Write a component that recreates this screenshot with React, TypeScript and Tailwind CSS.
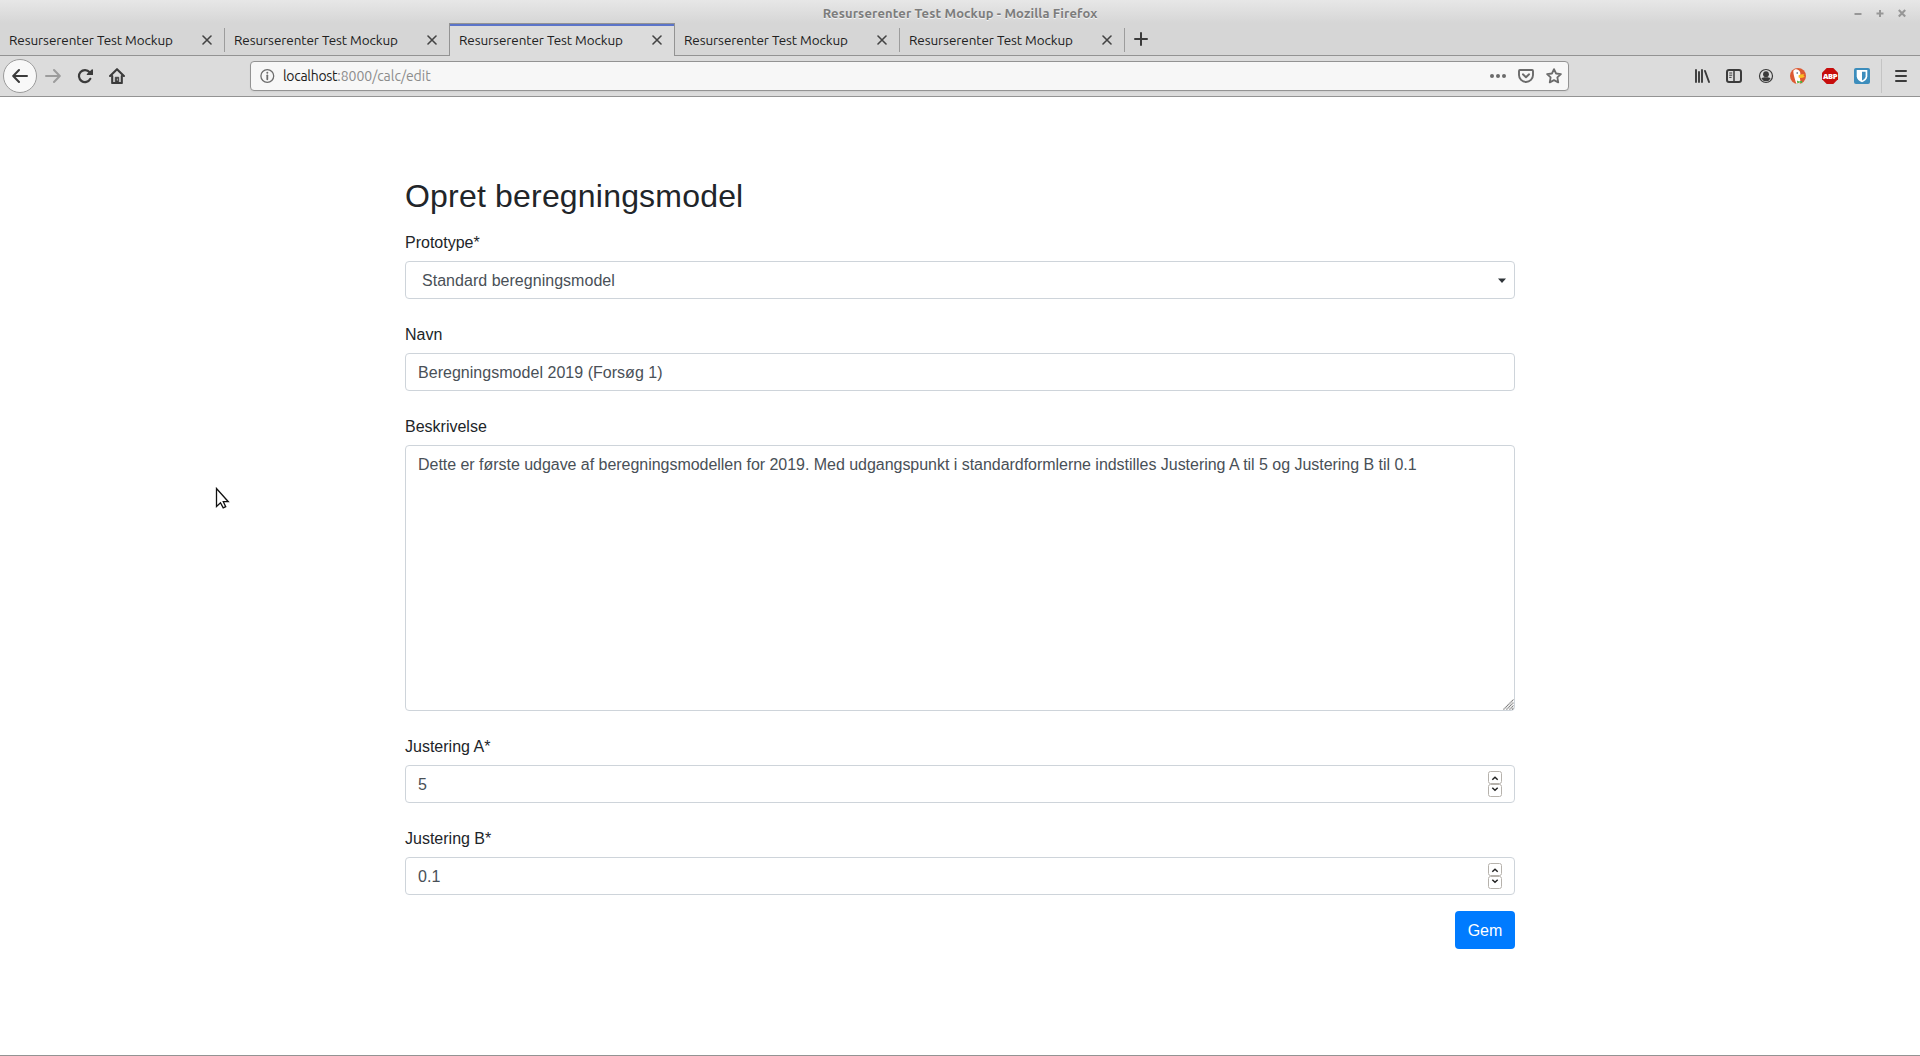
import React from 'react';

const TABS = [0, 1, 2, 3, 4];
const ACTIVE_TAB = 2;

function Field({ label, children }: { label: string; children: React.ReactNode }) {
  return (
    <div className="flex flex-col">
      <label className="mb-1.5 h-6 text-base leading-6 text-[#212529]">{label}</label>
      {children}
    </div>
  );
}

function TitleBar() {
  return (
    <div className="flex h-[23px] shrink-0 items-start bg-linear-to-b from-[#e7e7e7] to-[#d6d6d6]">
      <div className="w-[120px]" />
      <div className="flex-1 pt-1 text-center text-[13px] font-semibold leading-[18px] tracking-[0.13px] text-[#7c7c7c] [text-shadow:0_1px_0_#f4f4f4]">
        Resurserenter Test Mockup - Mozilla Firefox
      </div>
      <svg width="120" height="23" viewBox="0 0 120 23" fill="none" stroke="#979797" strokeWidth="2">
        <path d="M54.5 14h7M76.5 13.5h7M80 10v7" />
        <path d="M98.8 10l6.4 6.4M105.2 10l-6.4 6.4" strokeWidth="2.1" />
      </svg>
    </div>
  );
}

function Tab({ active, beforeActive }: { active: boolean; beforeActive: boolean }) {
  const frame = active
    ? 'w-[226px] -ml-px border-x border-t border-[#939393] bg-[#dcdcdc] pl-[9px]'
    : 'w-[225px] border-b border-[#939393] pl-[9px]';
  return (
    <div className={`relative flex h-[33px] shrink-0 ${frame}`}>
      {active && <div className="absolute inset-x-0 top-0 h-0.5 bg-[#5b74c9]" />}
      <div
        className={`w-[192px] whitespace-nowrap text-[13.5px] leading-[18px] tracking-[-0.08px] text-[#202020] ${
          active ? 'pt-[7px]' : 'pt-2'
        }`}
      >
        Resurserenter Test Mockup
      </div>
      <svg
        className={active ? 'mt-[11px]' : 'mt-3'}
        width="12"
        height="12"
        viewBox="0 0 12 12"
        stroke="#444"
        strokeWidth="1.6"
        strokeLinecap="round"
      >
        <path d="M2 1l8 8M10 1l-8 8" />
      </svg>
      {!active && !beforeActive && <div className="ml-auto mt-[5px] h-6 w-px bg-[#9c9c9c]" />}
    </div>
  );
}

function TabStrip() {
  return (
    <div className="flex h-[33px] shrink-0 bg-[#d6d6d6]">
      {TABS.map((i) => (
        <Tab key={i} active={i === ACTIVE_TAB} beforeActive={i === ACTIVE_TAB - 1} />
      ))}
      <div className="flex-1 border-b border-[#939393] pl-2">
        <svg width="16" height="32" viewBox="0 0 16 32" stroke="#3b3b3b" strokeWidth="2" strokeLinecap="round">
          <path d="M2 16h12M8 10v12" />
        </svg>
      </div>
    </div>
  );
}

function AddressBar() {
  return (
    <div className="flex h-[30px] w-[1319px] items-center rounded-[4px] border border-[#939393] bg-[#f7f7f7] pl-[9px] shadow-[0_1px_2px_rgba(0,0,0,0.06)]">
      <svg width="16" height="16" viewBox="0 0 16 16" fill="none" stroke="#6d6d6d">
        <circle cx="7.3" cy="8" r="6.4" strokeWidth="1.3" />
        <path d="M7.3 7.3v4" strokeWidth="1.8" strokeLinecap="round" />
        <circle cx="7.3" cy="4.7" r="1" fill="#6d6d6d" stroke="none" />
      </svg>
      <div className="ml-[7px] flex-1 whitespace-nowrap text-[14px] leading-5 tracking-[-0.03px] text-[#8c8c8c]">
        <span className="tracking-[-0.3px] text-[#1d1d1d]">localhost</span>:8000/calc/edit
      </div>
      <div className="flex items-center gap-3 pr-[6px]">
        <svg width="16" height="16" viewBox="0 0 16 16" fill="#6b6b6b">
          <circle cx="2" cy="8" r="2" />
          <circle cx="8" cy="8" r="2" />
          <circle cx="14" cy="8" r="2" />
        </svg>
        <svg width="16" height="16" viewBox="0 0 16 16" fill="none" stroke="#6b6b6b" strokeWidth="1.9" strokeLinejoin="round" strokeLinecap="round">
          <path d="M1.9 2h12.2a.9.9 0 0 1 .9.9V7a7 7 0 0 1-14 0V2.900a.9.9 0 0 1 .9-.9z" />
          <path d="M4.900 6.300L8 9.300l3.100-3" />
        </svg>
        <svg width="16" height="16" viewBox="0 0 16 16" fill="none" stroke="#6b6b6b" strokeWidth="1.8" strokeLinejoin="round">
          <path d="M8 1.100l2.050 4.400 4.850.6-3.550 3.350.9 4.950L8 12.100l-4.250 2.300.9-4.950L1.100 6.100l4.850-.6z" />
        </svg>
      </div>
    </div>
  );
}

function Extensions() {
  return (
    <div className="ml-auto flex h-full items-center">
      <div className="flex items-center gap-4 pr-[11px]">
        <svg width="16" height="16" viewBox="0 0 16 16" fill="none" stroke="#3b3b3b" strokeLinecap="round">
          <path d="M2 2v12M5 4v10M8 2v12M11 3l4 11" strokeWidth="1.900" />
        </svg>
        <svg width="16" height="16" viewBox="0 0 16 16" fill="none" stroke="#3b3b3b" strokeLinecap="round">
          <rect x="1" y="2" width="14" height="12" rx="2" strokeWidth="2" />
          <path d="M8 2.500v11" strokeWidth="1.500" />
          <path d="M3.600 5h2.200M3.600 7.200h2.200M3.600 9.400h1.600" strokeWidth="1" />
        </svg>
        <svg width="16" height="16" viewBox="0 0 16 16" fill="none">
          <circle cx="8" cy="8" r="6.500" stroke="#3b3b3b" strokeWidth="1.200" />
          <circle cx="8" cy="6.200" r="2.900" fill="#3b3b3b" />
          <path d="M3.400 10.500c1-1 2-.9 2.800-1.200h3.600c.8.3 1.800.2 2.800 1.200A5.200 5.200 0 0 1 8 13.200a5.200 5.200 0 0 1-4.600-2.700z" fill="#3b3b3b" />
        </svg>
        <svg width="16" height="16" viewBox="0 0 16 16">
          <circle cx="8" cy="8" r="8" fill="#dd5a33" />
          <path d="M3.300 3C4.200 1 6.800.9 8.300 2c1.600 1 2.100 2.400 2.100 4.200L9.600 8.500l1 5.800-.7 1.300a8 8 0 0 1-3.500.1C5.400 13 4 8.500 3.500 5.500z" fill="#fff" />
          <path d="M8.600 7.300c1.500-.9 3.600-1.200 5.900-.8l-1.200 1.100 1.400.7c-.6 1.400-3.900 2.200-6.100 1.200z" fill="#fbbf24" />
          <path d="M6.900 12.600l2.200 1 2.900-.9.300 2.500-2.900-.6-2 .9z" fill="#4caf3c" />
          <circle cx="7.200" cy="5" r=".8" fill="#35506e" />
        </svg>
        <div className="relative flex h-4 w-4 items-center justify-center">
          <svg className="absolute inset-0" width="16" height="16" viewBox="0 0 16 16">
            <path d="M4.700 0h6.600L16 4.700v6.600L11.300 16H4.700L0 11.300V4.700z" fill="#c70d0c" />
          </svg>
          <span className="relative font-['Open_Sans',sans-serif] text-[7.5px] font-extrabold leading-4 tracking-[-0.35px] text-white">ABP</span>
        </div>
        <svg width="16" height="16" viewBox="0 0 16 16">
          <rect width="16" height="16" rx="2" fill="#3c8dbc" />
          <path d="M2.700 2h10.600v6.300c0 3-2.500 4.900-5.300 6-2.800-1.100-5.300-3-5.300-6z" fill="#fff" />
          <path d="M8 3.700h3.600v4.500c0 1.900-1.700 3.300-3.600 4.200z" fill="#3c8dbc" />
        </svg>
      </div>
      <div className="h-[34px] w-px bg-[#c4c4c4]" />
      <svg className="ml-[11px] mr-[11px]" width="16" height="16" viewBox="0 0 16 16" stroke="#3b3b3b" strokeWidth="2" strokeLinecap="round">
        <path d="M3 3h10M3 8h10M3 13h10" />
      </svg>
    </div>
  );
}

function Toolbar() {
  return (
    <div className="flex h-[41px] shrink-0 items-center border-b border-[#939393] bg-[#dcdcdc]">
      <div className="flex w-[250px] items-center pl-[3px]">
        <div className="flex h-[34px] w-[34px] items-center justify-center rounded-full border border-[#9b9b9b] bg-[#f8f8f8]">
          <svg width="16" height="16" viewBox="0 0 16 16" fill="none" stroke="#3b3b3b" strokeWidth="2" strokeLinecap="round" strokeLinejoin="round">
            <path d="M15 8H1.500M7 2L1.200 8 7 14" />
          </svg>
        </div>
        <svg className="ml-2" width="16" height="16" viewBox="0 0 16 16" fill="none" stroke="#9c9c9c" strokeWidth="2" strokeLinecap="round" strokeLinejoin="round">
          <path d="M1 8h13.500M9 2l5.800 6L9 14" />
        </svg>
        <svg className="ml-4" width="16" height="16" viewBox="0 0 16 16" fill="none">
          <path d="M13.300 10.800A6 6 0 1 1 12.600 4.300" stroke="#3b3b3b" strokeWidth="2.200" strokeLinecap="round" />
          <path d="M15 1.300a.7.700 0 0 1 1 .5V6.500a.6.600 0 0 1-.6.600H10.300a.6.600 0 0 1-.4-1z" fill="#3b3b3b" />
        </svg>
        <svg className="ml-4" width="16" height="16" viewBox="0 0 16 16" fill="none" stroke="#3b3b3b" strokeLinejoin="round" strokeLinecap="round">
          <path d="M1.100 8L8 1.200 14.900 8" strokeWidth="2.100" />
          <path d="M3.200 8v7h9.600V8" strokeWidth="2.100" />
          <path d="M6.200 15V9.200h3.600V15z" fill="#3b3b3b" strokeWidth=".6" />
          <path d="M8.300 11v1.200" stroke="#ddd" strokeWidth=".8" />
        </svg>
      </div>
      <AddressBar />
      <Extensions />
    </div>
  );
}

function Spinner() {
  return (
    <svg width="14" height="26" viewBox="0 0 14 26" fill="none">
      <rect x=".5" y=".5" width="13" height="12" rx="2" stroke="#b6b2ac" />
      <rect x=".5" y="13.500" width="13" height="12" rx="2" stroke="#b6b2ac" />
      <path d="M4.300 8.700L7 6.200l2.700 2.500M4.300 16.700L7 19.200l2.700-2.500" stroke="#222" strokeWidth="1.500" />
    </svg>
  );
}

const inputBox =
  'flex h-[38px] items-center rounded-[4px] border border-[#ced4da] bg-white text-base leading-6 tracking-[0.03px] text-[#495057]';

export default function App() {
  return (
    <div className="relative flex h-[1056px] w-[1920px] flex-col overflow-hidden border-b border-[#939393] bg-white font-['Ubuntu','Noto_Sans',sans-serif]">
      <TitleBar />
      <TabStrip />
      <Toolbar />
      <main className="mx-auto w-[1110px] pt-20 font-['Liberation_Sans',Arial,sans-serif]">
        <h2 className="mb-[15px] h-[39px] text-[32px] font-normal leading-[38.4px] tracking-[0.19px] text-[#212529]">Opret beregningsmodel</h2>
        <form className="flex flex-col gap-6">
          <Field label="Prototype*">
            <div className={`${inputBox} justify-between pl-4 pr-2`}>
              <span className="pt-0.5">Standard beregningsmodel</span>
              <svg width="8" height="5" viewBox="0 0 8 5" fill="#2f3439">
                <path d="M0 .5h8L4 4.900z" />
              </svg>
            </div>
          </Field>
          <Field label="Navn">
            <div className={`${inputBox} px-3 pt-0.5`}>Beregningsmodel 2019 (Forsøg 1)</div>
          </Field>
          <Field label="Beskrivelse">
            <div className="flex h-[266px] flex-col justify-between rounded-[4px] border border-[#ced4da] bg-white pl-3 pt-[7px] text-base leading-6 tracking-[-0.033px] text-[#495057]">
              <p>Dette er første udgave af beregningsmodellen for 2019. Med udgangspunkt i standardformlerne indstilles Justering A til 5 og Justering B til 0.1</p>
              <svg className="self-end" width="11" height="11" viewBox="0 0 11 11" stroke="#777" strokeWidth="1.100" strokeDasharray="1.300 .4">
                <path d="M.5 10.500l10-10M3.500 10.500l7-7M6.500 10.500l4-4M9 10.500l1.500-1.500" />
              </svg>
            </div>
          </Field>
          <Field label="Justering A*">
            <div className={`${inputBox} justify-between px-3`}>
              <span className="pt-0.5">5</span>
              <Spinner />
            </div>
          </Field>
          <Field label="Justering B*">
            <div className={`${inputBox} justify-between px-3`}>
              <span className="pt-0.5">0.1</span>
              <Spinner />
            </div>
          </Field>
        </form>
        <div className="mt-4 flex justify-end">
          <button className="h-[38px] w-[60px] rounded-[4px] bg-[#007bff] pt-0.5 text-base leading-6 text-white">Gem</button>
        </div>
      </main>
      <svg className="absolute left-[215px] top-[487px]" width="16" height="24" viewBox="0 0 16 24">
        <path d="M1.500 1.500v18l4-3.700 2.700 5 2.500-1.200-2.400-4.900h5z" fill="#fff" stroke="#111" strokeWidth="1.300" />
      </svg>
    </div>
  );
}
